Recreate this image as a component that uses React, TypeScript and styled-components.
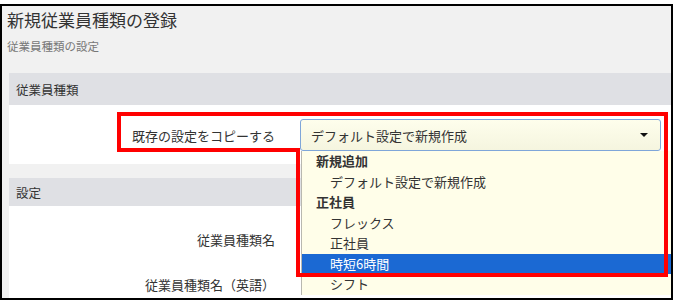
import styled, { createGlobalStyle } from 'styled-components';

const GlobalStyle = createGlobalStyle`
    body {
        margin: 0;
        background: #fff;
        font-family: "Noto Sans CJK JP", "Noto Sans", sans-serif;
        color: #333;
    }
`;

const Page = styled.div`
    position: relative;
    width: 675px;
    height: 305px;
    padding-top: 4px;
    box-sizing: border-box;
`;

const Frame = styled.div`
    width: 673px;
    height: 296px;
    box-sizing: border-box;
    border: 2px solid #000;
    background: #f1f1f1;
`;

const Inner = styled.div`
    height: 100%;
    overflow: hidden;
    display: flex;
    flex-direction: column;
`;

const Header = styled.div`
    padding: 2px 5px 0;
`;

const Title = styled.h1`
    margin: 0;
    font-size: 17px;
    line-height: 24px;
    font-weight: normal;
    color: #333;
`;

const SubTitle = styled.div`
    margin-top: 6px;
    font-size: 11.5px;
    line-height: 16px;
    color: #777;
`;

const Section = styled.section<{ $gap: number; $grow?: boolean }>`
    margin-top: ${p => p.$gap}px;
    margin-left: 7px;
    display: flex;
    flex-direction: column;
    flex: ${p => (p.$grow ? '1' : 'none')};
`;

const Band = styled.div<{ $h: number }>`
    height: ${p => p.$h}px;
    display: flex;
    align-items: center;
    padding-left: 7px;
    background: #dfe0e4;
    font-size: 12.5px;
    color: #333;
`;

const Panel = styled.div<{ $h?: number; $pt: number }>`
    background: #fff;
    padding-top: ${p => p.$pt}px;
    height: ${p => (p.$h ? `${p.$h}px` : 'auto')};
    flex: ${p => (p.$h ? 'none' : '1')};
    box-sizing: border-box;
`;

const Row = styled.div<{ $h?: number }>`
    display: grid;
    grid-template-columns: 266px 361px;
    column-gap: 25px;
    align-items: center;
    height: ${p => (p.$h ? `${p.$h}px` : 'auto')};
`;

const Label = styled.div`
    text-align: right;
    font-size: 13px;
    color: #333;
`;

const SelectWrap = styled.div`
    position: relative;
`;

const SelectBox = styled.div`
    height: 32px;
    box-sizing: border-box;
    border: 1px solid #7fa6d9;
    border-radius: 3px;
    background: linear-gradient(#fefeec, #f5f5df);
    display: flex;
    align-items: center;
    justify-content: space-between;
    padding: 0 10px;
    font-size: 13px;
    color: #333;
`;

const Caret = styled.span`
    width: 0;
    height: 0;
    border-left: 4px solid transparent;
    border-right: 4px solid transparent;
    border-top: 4px solid #111;
    margin-right: 2px;
`;

const ListBox = styled.ul`
    position: absolute;
    top: 100%;
    left: 1px;
    width: 370px;
    margin: 0;
    padding: 0;
    list-style: none;
    background: #fffee9;
    border-left: 1px solid #b8b8b0;
    z-index: 1;
`;

const Option = styled.li<{ $group?: boolean; $active?: boolean }>`
    height: 20.5px;
    line-height: 20.5px;
    font-size: 13px;
    padding-left: ${p => (p.$group ? 14 : 28)}px;
    font-weight: ${p => (p.$group ? 'bold' : 'normal')};
    background: ${p => (p.$active ? '#1b69d3' : 'transparent')};
    color: ${p => (p.$active ? '#fff' : '#333')};
`;

const Mark = styled.svg`
    position: absolute;
    left: 0;
    top: 0;
    pointer-events: none;
    z-index: 2;
`;

const options = [
    { text: '新規追加', group: true },
    { text: 'デフォルト設定で新規作成' },
    { text: '正社員', group: true },
    { text: 'フレックス' },
    { text: '正社員' },
    { text: '時短6時間', active: true },
    { text: 'シフト' },
];

const App = () => {
    return (
        <Page>
            <GlobalStyle />
            <Frame>
                <Inner>
                    <Header>
                        <Title>新規従業員種類の登録</Title>
                        <SubTitle>従業員種類の設定</SubTitle>
                    </Header>

                    <Section $gap={19}>
                        <Band $h={32}>従業員種類</Band>
                        <Panel $h={59} $pt={14}>
                            <Row>
                                <Label>既存の設定をコピーする</Label>
                                <SelectWrap>
                                    <SelectBox>
                                        <span>デフォルト設定で新規作成</span>
                                        <Caret />
                                    </SelectBox>
                                    <ListBox>
                                        {options.map((o, i) => (
                                            <Option key={i} $group={o.group} $active={o.active}>
                                                {o.text}
                                            </Option>
                                        ))}
                                    </ListBox>
                                </SelectWrap>
                            </Row>
                        </Panel>
                    </Section>

                    <Section $gap={14} $grow>
                        <Band $h={28}>設定</Band>
                        <Panel $pt={11}>
                            <Row $h={45}>
                                <Label>従業員種類名</Label>
                                <div />
                            </Row>
                            <Row $h={45}>
                                <Label>従業員種類名（英語）</Label>
                                <div />
                            </Row>
                        </Panel>
                    </Section>
                </Inner>
            </Frame>

            <Mark width="675" height="305" viewBox="0 0 675 305">
                <path
                    d="M119 114 H666 V275 H298 V150 H119 Z"
                    fill="none"
                    stroke="#ff0000"
                    strokeWidth="4"
                />
            </Mark>
        </Page>
    );
};

export default App;
